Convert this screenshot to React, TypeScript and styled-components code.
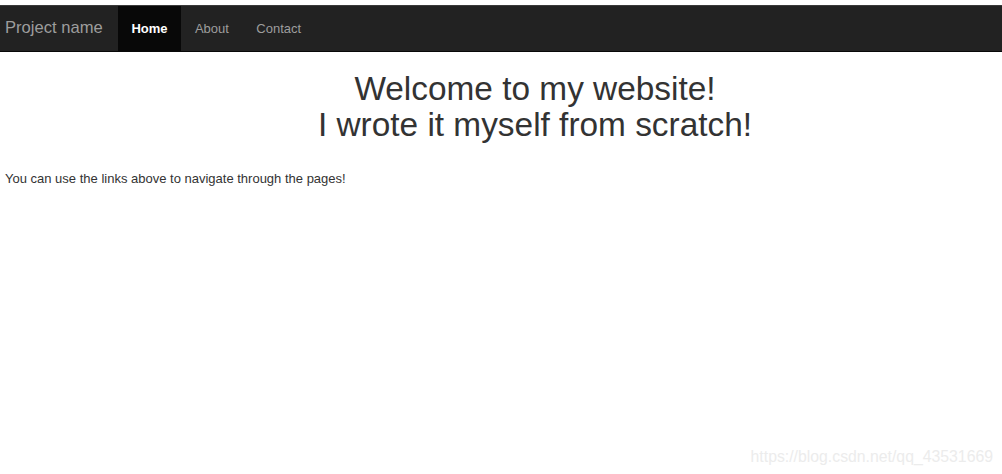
import React from "react";
import styled, { createGlobalStyle } from "styled-components";

const Global = createGlobalStyle`
  html, body { margin: 0; padding: 0; background: #fff; }
  body {
    font-family: "Liberation Sans", Arial, sans-serif;
    color: #333;
    overflow: hidden;
    width: 1002px;
    height: 474px;
  }
`;

const Page = styled.div`
  position: relative;
  width: 1002px;
  height: 474px;
  padding-top: 5px;
  box-sizing: border-box;
`;

const Navbar = styled.nav`
  display: flex;
  align-items: stretch;
  height: 47px;
  box-sizing: border-box;
  background: #222;
  border-top: 1px solid #3a3a3a;
  border-bottom: 1px solid #080808;
`;

const Brand = styled.a`
  display: flex;
  align-items: center;
  padding: 0 15px 1px 5px;
  font-size: 16.6px;
  color: #9d9d9d;
  text-decoration: none;
`;

const NavList = styled.ul`
  display: flex;
  list-style: none;
  margin: 0;
  padding: 0;
`;

const NavItem = styled.li<{ $active?: boolean }>`
  display: flex;
  align-items: center;
  padding: 0 13.7px 1px;
  font-size: 13px;
  font-weight: ${(p) => (p.$active ? "bold" : "normal")};
  color: ${(p) => (p.$active ? "#fff" : "#9d9d9d")};
  background: ${(p) => (p.$active ? "#080808" : "transparent")};
`;

const Main = styled.main`
  display: flex;
  flex-direction: column;
`;

const Heading = styled.h1`
  margin: 19px 0 0;
  padding-left: 68px;
  text-align: center;
  font-size: 33.4px;
  font-weight: normal;
  line-height: 36.3px;
  color: #333;
`;

const Text = styled.p`
  margin: 26px 0 0 5px;
  font-size: 13px;
  line-height: 18px;
  color: #333;
`;

const Watermark = styled.div`
  position: absolute;
  right: 9px;
  bottom: 8px;
  font-size: 15.8px;
  color: #ececec;
`;

export default function App() {
  return (
    <>
      <Global />
      <Page>
        <Navbar>
          <Brand>Project name</Brand>
          <NavList>
            <NavItem $active>Home</NavItem>
            <NavItem>About</NavItem>
            <NavItem>Contact</NavItem>
          </NavList>
        </Navbar>
        <Main>
          <Heading>
            Welcome to my website!
            <br />I wrote it myself from scratch!
          </Heading>
          <Text>You can use the links above to navigate through the pages!</Text>
        </Main>
        <Watermark>https://blog.csdn.net/qq_43531669</Watermark>
      </Page>
    </>
  );
}
